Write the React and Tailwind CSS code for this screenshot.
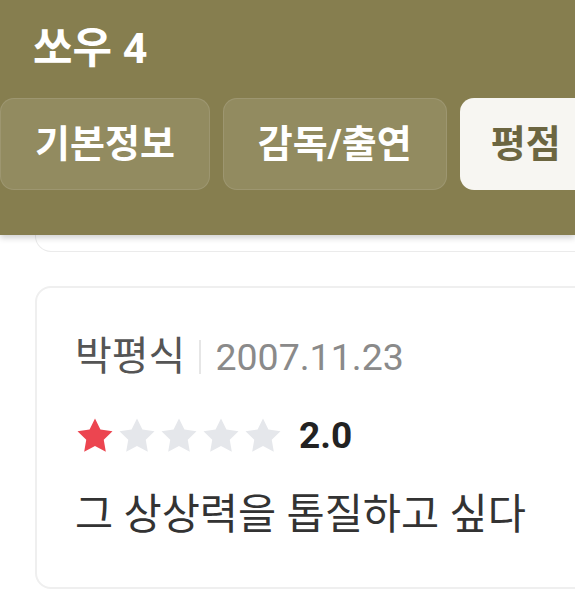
import React from 'react';

const font = "font-['Roboto','Noto_Sans_CJK_KR',sans-serif]";

const Star = ({ filled }) => (
  <svg viewBox="0 0 24 24" className="w-[42px] h-[42px] shrink-0">
    <polygon
      points="12,2 15.09,8.26 22,9.27 17,14.14 18.18,21.02 12,17.77 5.82,21.02 7,14.14 2,9.27 8.91,8.26"
      fill={filled ? '#ec4550' : '#e5e7eb'}
    />
  </svg>
);

const tabs = [
  { label: '기본정보', active: false },
  { label: '감독/출연', active: false },
  { label: '평점', active: true },
];

const App = () => {
  const score = 2;
  return (
    <div className={`w-[575px] h-[606px] overflow-hidden bg-white ${font}`}>
      <header className="relative z-10 bg-[#867e4f] h-[235px] shadow-[0_3px_6px_rgba(0,0,0,0.18)]">
        <h1 className="pl-[33px] pt-[21px] text-[43px] leading-[54px] font-bold text-white">쏘우 4</h1>
        <div className="mt-[23px] flex gap-[13px] whitespace-nowrap">
          {tabs.map((t) => (
            <div
              key={t.label}
              className={
                t.active
                  ? 'shrink-0 h-[92px] px-[31px] flex items-center rounded-[14px] bg-[#f7f6f2] text-[#6c6641] text-[38px] font-bold'
                  : 'shrink-0 h-[92px] px-[34px] flex items-center rounded-[14px] bg-white/10 border border-white/10 text-white text-[38px] font-bold'
              }
            >
              {t.label}
            </div>
          ))}
        </div>
      </header>

      <div className="pl-[35px]">
        <div className="w-[600px] h-[17px] border border-t-0 border-[#ebebeb] rounded-b-[16px]" />

        <div className="mt-[34px] w-[600px] border-2 border-[#efefef] rounded-[16px] pl-[38px] pt-[45px] pb-[46px]">
          <div className="flex items-center h-[48px]">
            <span className="text-[40px] text-[#555555]">박평식</span>
            <span className="mx-[14px] w-[2px] h-[34px] bg-[#e6e6e6]" />
            <span className="text-[37.5px] text-[#8a8a8a]">2007.11.23</span>
          </div>
          <div className="mt-[34px] flex items-center h-[42px] -ml-[1px]">
            {[1, 2, 3, 4, 5].map((i) => (
              <Star key={i} filled={i <= score / 2} />
            ))}
            <span className="ml-[15px] text-[37px] font-bold text-[#222222]">{score.toFixed(1)}</span>
          </div>
          <p className="mt-[32px] text-[41.5px] leading-[52px] text-[#333333]">그 상상력을 톱질하고 싶다</p>
        </div>
      </div>
    </div>
  );
};

export default App;
